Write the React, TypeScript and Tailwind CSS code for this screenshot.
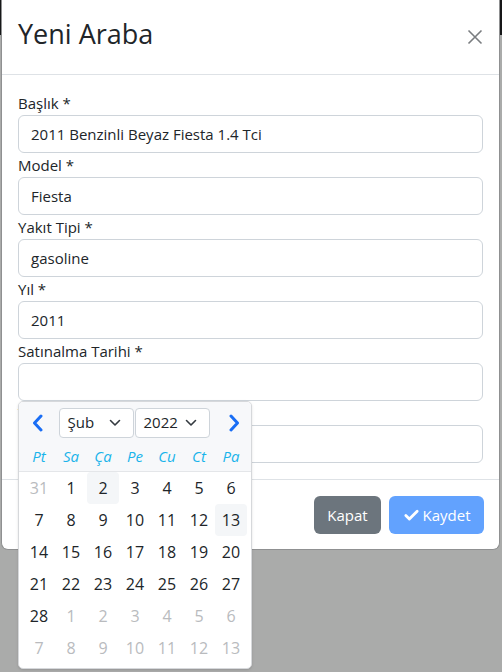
import { Check } from "lucide-react";

const fields = [
  { label: "Başlık *", value: "2011 Benzinli Beyaz Fiesta 1.4 Tci" },
  { label: "Model *", value: "Fiesta" },
  { label: "Yakıt Tipi *", value: "gasoline" },
  { label: "Yıl *", value: "2011" },
  { label: "Satınalma Tarihi *", value: "" },
  { label: "Tescil Tarihi *", value: "" },
];

const weekDays = ["Pt", "Sa", "Ça", "Pe", "Cu", "Ct", "Pa"];

type Day = { n: number; muted?: boolean; selected?: boolean; today?: boolean };

const weeks: Day[][] = [
  [{ n: 31, muted: true }, { n: 1 }, { n: 2, selected: true }, { n: 3 }, { n: 4 }, { n: 5 }, { n: 6 }],
  [{ n: 7 }, { n: 8 }, { n: 9 }, { n: 10 }, { n: 11 }, { n: 12 }, { n: 13, today: true }],
  [{ n: 14 }, { n: 15 }, { n: 16 }, { n: 17 }, { n: 18 }, { n: 19 }, { n: 20 }],
  [{ n: 21 }, { n: 22 }, { n: 23 }, { n: 24 }, { n: 25 }, { n: 26 }, { n: 27 }],
  [{ n: 28 }, { n: 1, muted: true }, { n: 2, muted: true }, { n: 3, muted: true }, { n: 4, muted: true }, { n: 5, muted: true }, { n: 6, muted: true }],
  [7, 8, 9, 10, 11, 12, 13].map((n) => ({ n, muted: true })),
];

const Chevron = ({ dir }: { dir: "left" | "right" }) => (
  <svg width="14" height="18" viewBox="0 0 14 18" fill="none">
    <path
      d={dir === "left" ? "M10 2 L3.5 9 L10 16" : "M4 2 L10.5 9 L4 16"}
      stroke="#1a6ef5"
      strokeWidth="3"
      strokeLinecap="round"
      strokeLinejoin="round"
    />
  </svg>
);

const SelectBox = ({ value }: { value: string }) => (
  <div className="flex h-[30px] w-[75px] items-center justify-between rounded-[4px] border border-[#ced4da] bg-white pl-2 pr-3 text-[15px] text-[#212529]">
    <span>{value}</span>
    <svg width="12" height="8" viewBox="0 0 12 8" fill="none">
      <path d="M1.5 1.5 L6 6 L10.5 1.5" stroke="#343a40" strokeWidth="1.6" strokeLinecap="round" strokeLinejoin="round" />
    </svg>
  </div>
);

function DatePicker() {
  return (
    <div className="absolute left-[18px] top-[401px] w-[234px] overflow-hidden rounded-[5px] border border-[#d6d8db] bg-white shadow-sm">
      <div className="border-b border-[#e4e6e9] bg-[#f7f8fa] pb-[2px]">
        <div className="flex h-[41px] items-center justify-between pl-[12px] pr-[10px]">
          <Chevron dir="left" />
          <div className="-ml-[4px] flex gap-[1px]">
            <SelectBox value="Şub" />
            <SelectBox value="2022" />
          </div>
          <Chevron dir="right" />
        </div>
        <div className="grid h-[26px] grid-cols-7 px-[4px]">
          {weekDays.map((d) => (
            <span key={d} className="flex items-center justify-center text-[15px] italic text-[#1ab4ea]">
              {d}
            </span>
          ))}
        </div>
      </div>
      <div className="px-[4px] pb-[4px]">
        {weeks.map((w, i) => (
          <div key={i} className="grid grid-cols-7">
            {w.map((d, j) => (
              <span
                key={j}
                className={`flex h-[32px] items-center justify-center rounded-[4px] text-base ${
                  d.muted ? "text-[#b9bbbe]" : "text-[#212529]"
                } ${d.selected || d.today ? "bg-[#f4f6f8]" : ""}`}
              >
                {d.n}
              </span>
            ))}
          </div>
        ))}
      </div>
    </div>
  );
}

export default function App() {
  return (
    <div className="relative h-[672px] w-[502px] overflow-hidden bg-[#aaabaa] font-['Open_Sans','Noto_Sans',sans-serif] text-[#212529]">
      <div className="h-[35px] bg-[#161718]" />

      <div className="absolute left-[1px] top-0 w-[499px] rounded-b-[7px] border-x border-b border-[#8f9091] bg-white">
        <div className="flex h-[75px] items-center justify-between border-b border-[#dee2e6] px-4 pb-[7px]">
          <h3 className="text-[27px] font-medium leading-tight">Yeni Araba</h3>
          <svg width="16" height="16" viewBox="0 0 16 16" className="mt-[6px]">
            <path d="M1.5 1.5 L14.5 14.5 M14.5 1.5 L1.5 14.5" stroke="#7a7d80" strokeWidth="1.6" />
          </svg>
        </div>

        <div className="px-4 pb-4 pt-[16px]">
          {fields.map((f) => (
            <div key={f.label}>
              <label className="block h-[24px] text-[15px] leading-6">{f.label}</label>
              <div className="flex h-[38px] items-center rounded-[6px] border border-[#ced4da] px-3 text-[15px]">
                {f.value}
              </div>
            </div>
          ))}
        </div>

        <div className="flex justify-end gap-2 border-t border-[#dee2e6] pb-[15px] pl-4 pr-[15px] pt-4">
          <button className="h-[38px] w-[67px] rounded-[6px] bg-[#6c757d] text-[15px] text-white">Kapat</button>
          <button className="flex h-[38px] w-[95px] items-center justify-center gap-[3px] rounded-[6px] bg-[#62a2fe] text-[15px] text-white">
            <Check size={17} strokeWidth={4} />
            Kaydet
          </button>
        </div>
      </div>

      <DatePicker />
    </div>
  );
}
